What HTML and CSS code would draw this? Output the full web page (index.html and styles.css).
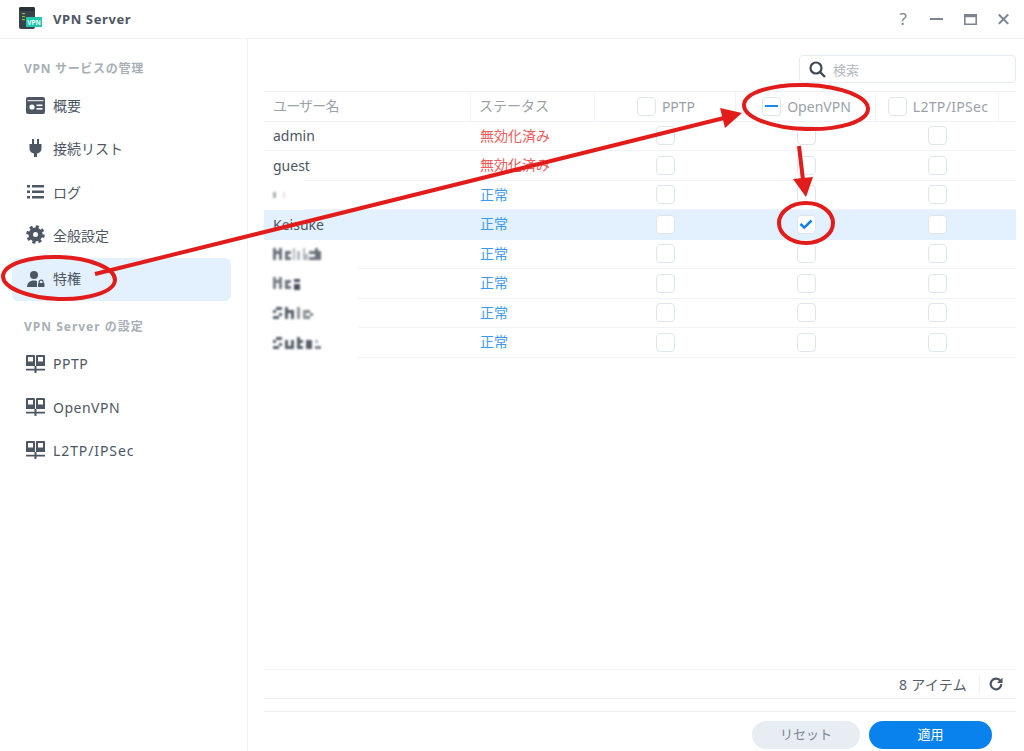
FILE: index.html
```html
<!DOCTYPE html>
<html lang="ja">
<head>
<meta charset="utf-8">
<title>VPN Server</title>
<link rel="stylesheet" href="styles.css">
</head>
<body>
<svg class="defs" width="0" height="0" aria-hidden="true">
  <symbol id="net" viewBox="0 0 19 18">
    <path fill="#4d5663" fill-rule="evenodd" d="M1 0h7a1 1 0 0 1 1 1v10H0V1a1 1 0 0 1 1-1zm1 2v4.500h5V2zM11 0h7a1 1 0 0 1 1 1v10h-9V1a1 1 0 0 1 1-1zm1 2v4.500h5V2z"/>
    <path fill="#4d5663" d="M8.500 11h2v2.800H19v1.700h-8.500V18h-2v-2.500H0v-1.700h8.500z"/>
  </symbol>
</svg>
<div class="window">
  <header class="titlebar">
    <div class="app">
      <svg class="app-icon" width="24" height="24" viewBox="0 0 24 24">
        <rect x="0" y="0" width="16" height="22" rx="2" fill="#3a424c"/>
        <rect x="0" y="0" width="16" height="4" rx="2" fill="#2b3139"/>
        <rect x="3" y="6" width="3" height="1.200" fill="#7fc241"/>
        <rect x="3" y="9" width="3" height="1.200" fill="#7fc241"/>
        <rect x="3" y="12" width="3" height="1.200" fill="#7fc241"/>
        <rect x="7" y="10" width="16" height="10" fill="#25c6ae"/>
        <text x="15" y="17.500" class="app-tag" text-anchor="middle">VPN</text>
      </svg>
      <span class="app-name">VPN Server</span>
    </div>
    <div class="controls">
      <span class="help">?</span>
      <svg width="13" height="12" viewBox="0 0 13 12"><rect y="5" width="13" height="2" fill="#7b8591"/></svg>
      <svg width="13" height="12" viewBox="0 0 13 12"><path fill="#7b8591" fill-rule="evenodd" d="M0 1h13v11H0zm1.600 3.200v6.200h9.800V4.200z"/></svg>
      <svg width="11" height="12" viewBox="0 0 11 12"><path d="M.8 1.500l9.400 9.400M10.200 1.500L.8 10.900" stroke="#7b8591" stroke-width="2" fill="none"/></svg>
    </div>
  </header>
  <div class="main">
    <aside class="sidebar">
      <div class="section-title first">VPN サービスの管理</div>
      <div class="nav-item">
        <svg class="nav-icon" width="19" height="17" viewBox="0 0 19 17"><rect width="19" height="17" rx="2" fill="#4d5663"/><circle cx="6" cy="10" r="2.600" fill="#fff"/><rect x="10.500" y="7.500" width="6" height="1.600" fill="#fff"/><rect x="10.500" y="11" width="6" height="1.600" fill="#fff"/><rect x="1.500" y="3.200" width="16" height="1" fill="#fff"/></svg>
        <span>概要</span>
      </div>
      <div class="nav-item">
        <svg class="nav-icon" width="19" height="18" viewBox="0 0 19 18"><path fill="#4d5663" d="M6 0h2v5h3V0h2v5h2.500v4.500c0 2.700-2 4.700-4.500 5V18H8v-3.500c-2.500-.3-4.500-2.300-4.500-5V5H6z"/></svg>
        <span>接続リスト</span>
      </div>
      <div class="nav-item">
        <svg class="nav-icon" width="19" height="14" viewBox="0 0 19 14"><path fill="#4d5663" d="M1 0h3v2.400H1zM6 0h12v2.400H6zM1 5.500h3v2.400H1zM6 5.500h12v2.400H6zM1 11h3v2.400H1zM6 11h12v2.400H6z"/></svg>
        <span>ログ</span>
      </div>
      <div class="nav-item">
        <svg class="nav-icon" width="19" height="19" viewBox="0 0 19 19"><circle cx="9.500" cy="9.500" r="4.800" fill="none" stroke="#4d5663" stroke-width="4.600"/><circle cx="9.500" cy="9.500" r="7.800" fill="none" stroke="#4d5663" stroke-width="3" stroke-dasharray="3.100 3.020"/></svg>
        <span>全般設定</span>
      </div>
      <div class="nav-item active">
        <svg class="nav-icon" width="19" height="18" viewBox="0 0 19 18"><circle cx="8" cy="6" r="4" fill="#4d5663"/><path fill="#4d5663" d="M1 18c0-3.800 2.800-6.500 7-6.500 1.300 0 2.200.2 3 .6V18z"/><path fill="none" stroke="#4d5663" stroke-width="1.200" d="M13.300 14v-1a1.900 1.900 0 0 1 3.800 0v1"/><rect x="12" y="14" width="6.500" height="4" rx=".8" fill="#4d5663"/></svg>
        <span>特権</span>
      </div>
      <div class="section-title server">VPN Server の設定</div>
      <div class="nav-item"><svg class="nav-icon" width="19" height="18"><use href="#net"/></svg><span class="latin">PPTP</span></div>
      <div class="nav-item"><svg class="nav-icon" width="19" height="18"><use href="#net"/></svg><span class="latin">OpenVPN</span></div>
      <div class="nav-item"><svg class="nav-icon" width="19" height="18"><use href="#net"/></svg><span class="latin long">L2TP/IPSec</span></div>
    </aside>
    <section class="content">
      <div class="toolbar">
        <div class="search">
          <svg width="17" height="17" viewBox="0 0 17 17"><circle cx="7" cy="7" r="5.500" fill="none" stroke="#3f4a56" stroke-width="2.200"/><path d="M11 11l5 5" stroke="#3f4a56" stroke-width="2.400"/></svg>
          <span>検索</span>
        </div>
      </div>
      <div class="table">
        <div class="row head">
          <div class="cell name tight">ユーザー名</div>
          <div class="cell status">ステータス</div>
          <div class="cell check"><i class="box"></i>PPTP</div>
          <div class="cell check"><i class="box mixed"></i>OpenVPN</div>
          <div class="cell check"><i class="box"></i><span class="spaced">L2TP/IPSec</span></div>
          <div class="cell"></div>
        </div>
        <div class="row">
          <div class="cell name">admin</div><div class="cell status off">無効化済み</div>
          <div class="cell check"><i class="box"></i></div><div class="cell check"><i class="box"></i></div><div class="cell check"><i class="box"></i></div><div class="cell"></div>
        </div>
        <div class="row">
          <div class="cell name">guest</div><div class="cell status off">無効化済み</div>
          <div class="cell check"><i class="box"></i></div><div class="cell check"><i class="box"></i></div><div class="cell check"><i class="box"></i></div><div class="cell"></div>
        </div>
        <div class="row">
          <div class="mask short">
            <svg width="20" height="8" viewBox="0 0 20 8"><rect x="0" y="1" width="3" height="6" fill="#a9adb2"/><rect x="10" y="1" width="2" height="6" fill="#dfe1e3"/></svg>
          </div>
          <div class="cell name"></div><div class="cell status on">正常</div>
          <div class="cell check"><i class="box"></i></div><div class="cell check"><i class="box"></i></div><div class="cell check"><i class="box"></i></div><div class="cell"></div>
        </div>
        <div class="row selected">
          <div class="cell name">Keisuke</div><div class="cell status on">正常</div>
          <div class="cell check"><i class="box"></i></div>
          <div class="cell check"><i class="box checked"><svg width="16" height="16" viewBox="0 0 16 16"><path d="M2.500 8l3.800 3.600L13.500 4.500" fill="none" stroke="#0d80ee" stroke-width="2.500"/></svg></i></div>
          <div class="cell check"><i class="box"></i></div><div class="cell"></div>
        </div>
        <div class="row">
          <div class="mask">
            <svg width="48" height="12" viewBox="0 0 48 12"><path fill="#6b727b" d="M0 0h3v12H0zM3 3h3v3H3zM6 0h3v12H6zM12 3h6v3h-6zM12 6h3v6h-3zM15 9h3v3h-3z"/><path fill="#b4b8bd" d="M20 0h2v12h-2zM24 3h3v9h-3zM30 0h2v12h-2zM32 6h3v6h-3z"/><path fill="#6b727b" d="M36 3h6v3h-6zM36 9h6v3h-6zM42 0h3v12h-3zM45 3h3v9h-3z"/></svg>
          </div>
          <div class="cell name"></div><div class="cell status on">正常</div>
          <div class="cell check"><i class="box"></i></div><div class="cell check"><i class="box"></i></div><div class="cell check"><i class="box"></i></div><div class="cell"></div>
        </div>
        <div class="row">
          <div class="mask">
            <svg width="27" height="13" viewBox="0 0 27 13"><path fill="#7b8189" d="M0 0h3v12H0zM3 3h3v3H3zM6 0h3v12H6z"/><path fill="#6b727b" d="M12 3h6v3h-6zM12 6h3v6h-3zM15 9h3v3h-3z"/><path fill="#454e59" d="M21 2h6v3h-6zM21 7h6v6h-6z"/></svg>
          </div>
          <div class="cell name"></div><div class="cell status on">正常</div>
          <div class="cell check"><i class="box"></i></div><div class="cell check"><i class="box"></i></div><div class="cell check"><i class="box"></i></div><div class="cell"></div>
        </div>
        <div class="row">
          <div class="mask">
            <svg width="40" height="12" viewBox="0 0 40 12"><path fill="#555e69" d="M0 3h3v3H0zM3 0h6v3H3zM0 9h6v3H0zM6 6h3v3H6zM12 0h3v12h-3zM15 3h3v3h-3zM18 3h3v9h-3z"/><path fill="#8f959c" d="M24 0h3v12h-3zM30 3h3v9h-3z"/><path fill="#7b8189" d="M33 3h4v3h-4zM37 6h3v3h-3zM33 9h4v3h-4z"/></svg>
          </div>
          <div class="cell name"></div><div class="cell status on">正常</div>
          <div class="cell check"><i class="box"></i></div><div class="cell check"><i class="box"></i></div><div class="cell check"><i class="box"></i></div><div class="cell"></div>
        </div>
        <div class="row">
          <div class="mask">
            <svg width="48" height="12" viewBox="0 0 48 12"><path fill="#555e69" d="M0 3h3v3H0zM3 0h6v3H3zM0 9h6v3H0zM6 6h3v3H6zM12 3h3v9h-3zM15 9h3v3h-3zM18 3h3v9h-3zM24 0h3v12h-3zM27 3h3v3h-3zM27 9h3v3h-3zM33 3h6v9h-6z"/><path fill="#b4b8bd" d="M42 3h3v3h-3z"/><path fill="#7b8189" d="M42 9h3v3h-3zM45 9h3v3h-3z"/></svg>
          </div>
          <div class="cell name"></div><div class="cell status on">正常</div>
          <div class="cell check"><i class="box"></i></div><div class="cell check"><i class="box"></i></div><div class="cell check"><i class="box"></i></div><div class="cell"></div>
        </div>
      </div>
      <div class="pager">
        <span class="count">8 アイテム</span>
        <span class="pager-sep"></span>
        <svg width="14" height="14" viewBox="0 0 14 14"><path d="M11.500 4.200A5.300 5.300 0 1 0 12.300 7" fill="none" stroke="#4d5663" stroke-width="2.200"/><path d="M13.500 0.500v5.500H8z" fill="#4d5663"/></svg>
      </div>
      <div class="actions">
        <button class="btn reset" type="button">リセット</button>
        <button class="btn apply" type="button">適用</button>
      </div>
    </section>
  </div>
  <svg class="annotations" width="1024" height="751" viewBox="0 0 1024 751" aria-hidden="true">
    <g fill="none" stroke="#e21b1b" stroke-width="4">
      <ellipse cx="59" cy="278" rx="56" ry="21" transform="rotate(2 59 278)"/>
      <ellipse cx="806" cy="107" rx="62" ry="22" transform="rotate(2 806 107)"/>
      <ellipse cx="806" cy="223" rx="27" ry="20"/>
      <path d="M95 274L724 118"/>
      <path d="M799 146L803 180"/>
    </g>
    <path fill="#e21b1b" d="M742 113L720 108L725 128zM806 197L793 179L813 177z"/>
  </svg>
</div>
</body>
</html>
```
FILE: styles.css
```css
* { box-sizing: border-box; }
html, body { margin: 0; padding: 0; height: 100%; background: #fff; }
body { font-family: "Noto Sans", "Noto Sans CJK JP", sans-serif; color: #4d5663; overflow: hidden; }
.defs { position: absolute; }
.window { position: relative; width: 1024px; height: 751px; display: flex; flex-direction: column; }

.titlebar { height: 39px; flex: none; display: flex; align-items: center; justify-content: space-between; border-bottom: 1px solid #edf1f6; padding: 0 15px 1px 19px; }
.app { display: flex; align-items: center; gap: 10px; }
.app-icon { display: block; }
.app-tag { font-size: 6.500px; font-weight: 700; fill: #e8fff9; font-family: "Noto Sans", sans-serif; }
.app-name { font-size: 13px; font-weight: 700; color: #4d5663; letter-spacing: 0.600px; }
.controls { display: flex; align-items: center; gap: 21px; }
.controls svg { display: block; }
.help { font-size: 17px; line-height: 20px; color: #7b8591; margin-right: 2px; }

.main { flex: 1; display: flex; min-height: 0; }
.sidebar { width: 248px; flex: none; border-right: 1px solid #edf1f6; padding: 0 16px 0 12px; }
.section-title { font-size: 12px; font-weight: 700; color: #a9afb6; padding-left: 12px; height: 41px; display: flex; align-items: flex-end; padding-bottom: 7px; letter-spacing: 0.700px; }
.section-title.first { height: 46px; padding-bottom: 8px; }
.section-title.server { letter-spacing: 1px; }
.nav-item { height: 43.250px; display: flex; align-items: center; padding: 0 0 3px 14px; font-size: 14px; border-radius: 6px; }
.section-title.server ~ .nav-item { padding-bottom: 0; }
.nav-item.active { background: #e3f0fd; }
.nav-icon { width: 19px; margin-right: 8px; flex: none; display: block; }
.latin { letter-spacing: 0.500px; }
.latin.long { letter-spacing: 0.900px; }

.content { flex: 1; min-width: 0; display: flex; flex-direction: column; padding: 0 8px 0 16px; }
.toolbar { height: 52px; flex: none; display: flex; justify-content: flex-end; align-items: flex-end; padding-bottom: 8px; }
.search { width: 217px; height: 28px; border: 1px solid #e6ebf2; border-radius: 4px; display: flex; align-items: center; gap: 7px; padding-left: 9px; font-size: 13px; color: #b4bac1; }
.search svg { display: block; }

.table { flex: none; font-size: 14px; }
.row { position: relative; display: grid; grid-template-columns: 207px 124px 141px 140px 123px 17px; height: 29.500px; border-bottom: 1px solid #f0f3f7; }
.row.head { height: 30.500px; border-top: 1px solid #edf1f6; border-bottom: 1px solid #edf1f6; color: #9aa1a9; }
.row.selected { background: #e3f0fd; border-bottom-color: #e3f0fd; }
.cell { display: flex; align-items: center; min-width: 0; }
.cell.name { padding-left: 9px; }
.cell.status { padding: 0 0 2px 9px; }
.cell.tight { padding-bottom: 2px; letter-spacing: -0.800px; }
.head .cell { border-right: 1px solid #f0f3f7; }
.head .cell:last-child { border-right: 0; }
.head .cell.status { padding-left: 8px; }
.cell.check { justify-content: center; gap: 5px; }
.head .cell.check { gap: 6px; padding-left: 2px; }
.spaced { letter-spacing: 0.300px; }
.status.off { color: #f05a5a; }
.status.on { color: #3d9bee; }
.box { display: block; width: 19px; height: 19px; border: 1.500px solid #dfe5ed; border-radius: 4px; background: #fff; position: relative; flex: none; }
.box.mixed::after { content: ""; position: absolute; left: 2px; right: 2px; top: 7px; height: 2px; background: #1b88ee; }
.box svg { display: block; position: absolute; left: 0; top: 0; }
.mask { position: absolute; left: 0; top: 0; bottom: -1px; width: 94px; background: #fff; z-index: 1; display: flex; align-items: center; padding-left: 9px; }
.mask.short { width: 40px; top: -1px; }
.mask svg { display: block; filter: blur(0.800px); }

.pager { margin-top: auto; height: 30px; flex: none; border-top: 1px solid #f0f3f7; border-bottom: 1px solid #edf1f6; display: flex; align-items: center; justify-content: flex-end; padding-right: 13px; font-size: 14px; color: #555e69; }
.pager svg { display: block; }
.count { letter-spacing: 0.300px; }
.pager-sep { width: 1px; height: 19px; background: #edf1f6; margin: 0 9px 0 12px; }
.actions { height: 40px; flex: none; margin-top: 12px; border-top: 1px solid #edf1f6; display: flex; justify-content: flex-end; align-items: flex-start; gap: 9px; padding: 9px 24px 0 0; }
.btn { height: 28px; border: 0; border-radius: 14px; font: inherit; font-size: 13px; padding: 0 0 3px; }
.btn.reset { width: 108px; background: #e8edf3; color: #7b8591; }
.btn.apply { width: 123px; background: #0a82ee; color: #fff; }

.annotations { position: absolute; left: 0; top: 0; pointer-events: none; }
```
